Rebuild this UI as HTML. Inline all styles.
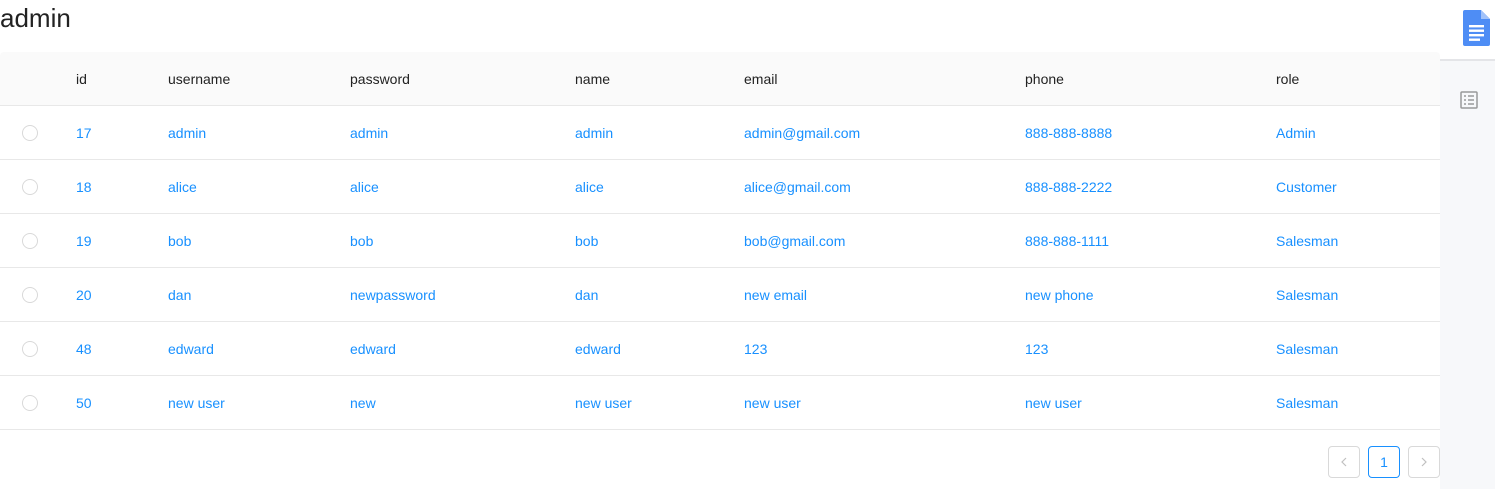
<!DOCTYPE html>
<html><head><style>
body{margin:0;width:1495px;height:489px;background:#fff;font-family:"Liberation Sans",sans-serif;position:relative;overflow:hidden}
h1{position:absolute;left:0;top:3px;margin:0;font-weight:normal;font-size:26px;color:#222}
.side{position:absolute;left:1440px;top:0;width:55px;height:489px;background:#f7f8fa}
.tab{position:absolute;left:0;top:0;width:55px;height:59px;background:#fff;border-bottom:2px solid #e4e5e8}
.row{position:absolute;left:0;width:1440px;height:53px;border-bottom:1px solid #e8e8e8;font-size:14px}
.row span{position:absolute;top:19px}
.hd{background:#fafafa;color:#222;border-radius:4px 4px 0 0}
.d{color:#1890ff}
.cb{position:absolute;left:22px;top:19px;width:14px;height:14px;border:1px solid #d9d9d9;border-radius:50%;background:#fff}
.pg{position:absolute;top:446px;width:30px;height:30px;border:1px solid #d9d9d9;border-radius:4px;color:#bbb;text-align:center;line-height:30px;font-size:14px}
.pg svg{position:absolute;left:11px;top:10px}
</style></head><body>
<h1>admin</h1>
<div class="row hd" style="top:52px"><span style="left:76px">id</span><span style="left:168px">username</span><span style="left:350px">password</span><span style="left:575px">name</span><span style="left:744px">email</span><span style="left:1025px">phone</span><span style="left:1276px">role</span></div>
<div class="row d" style="top:106px"><div class="cb"></div><span style="left:76px">17</span><span style="left:168px">admin</span><span style="left:350px">admin</span><span style="left:575px">admin</span><span style="left:744px">admin@gmail.com</span><span style="left:1025px">888-888-8888</span><span style="left:1276px">Admin</span></div>
<div class="row d" style="top:160px"><div class="cb"></div><span style="left:76px">18</span><span style="left:168px">alice</span><span style="left:350px">alice</span><span style="left:575px">alice</span><span style="left:744px">alice@gmail.com</span><span style="left:1025px">888-888-2222</span><span style="left:1276px">Customer</span></div>
<div class="row d" style="top:214px"><div class="cb"></div><span style="left:76px">19</span><span style="left:168px">bob</span><span style="left:350px">bob</span><span style="left:575px">bob</span><span style="left:744px">bob@gmail.com</span><span style="left:1025px">888-888-1111</span><span style="left:1276px">Salesman</span></div>
<div class="row d" style="top:268px"><div class="cb"></div><span style="left:76px">20</span><span style="left:168px">dan</span><span style="left:350px">newpassword</span><span style="left:575px">dan</span><span style="left:744px">new email</span><span style="left:1025px">new phone</span><span style="left:1276px">Salesman</span></div>
<div class="row d" style="top:322px"><div class="cb"></div><span style="left:76px">48</span><span style="left:168px">edward</span><span style="left:350px">edward</span><span style="left:575px">edward</span><span style="left:744px">123</span><span style="left:1025px">123</span><span style="left:1276px">Salesman</span></div>
<div class="row d" style="top:376px"><div class="cb"></div><span style="left:76px">50</span><span style="left:168px">new user</span><span style="left:350px">new</span><span style="left:575px">new user</span><span style="left:744px">new user</span><span style="left:1025px">new user</span><span style="left:1276px">Salesman</span></div>
<div class="pg" style="left:1328px"><svg width="8" height="10" viewBox="0 0 8 10" fill="none" stroke="#c0c0c0" stroke-width="1.2"><path d="M6 1L2 5l4 4"/></svg></div>
<div class="pg" style="left:1368px;border-color:#1890ff;color:#1890ff">1</div>
<div class="pg" style="left:1408px"><svg width="8" height="10" viewBox="0 0 8 10" fill="none" stroke="#c0c0c0" stroke-width="1.2"><path d="M2 1l4 4-4 4"/></svg></div>
<div class="side"><div class="tab">
<svg style="position:absolute;left:23px;top:10px" width="27" height="36" viewBox="0 0 27 36"><path d="M2 0H18L27 9V34a2 2 0 0 1-2 2H2a2 2 0 0 1-2-2V2a2 2 0 0 1 2-2z" fill="#4e8df5"/><path d="M18 0L27 9H18z" fill="#a1c2fa"/><rect x="6" y="15" width="15" height="2.4" fill="#fff"/><rect x="6" y="19.5" width="15" height="2.4" fill="#fff"/><rect x="6" y="24" width="15" height="2.4" fill="#fff"/><rect x="6" y="28.5" width="11" height="2.4" fill="#fff"/></svg>
</div>
<svg style="position:absolute;left:20px;top:91px" width="18" height="18" viewBox="0 0 18 18" fill="none" stroke="#999" stroke-width="1.5"><rect x="1" y="1" width="16" height="16" rx="1"/><path d="M4 5h2M8 5h6M4 9h2M8 9h6M4 13h2M8 13h6"/></svg>
</div>
</body></html>
